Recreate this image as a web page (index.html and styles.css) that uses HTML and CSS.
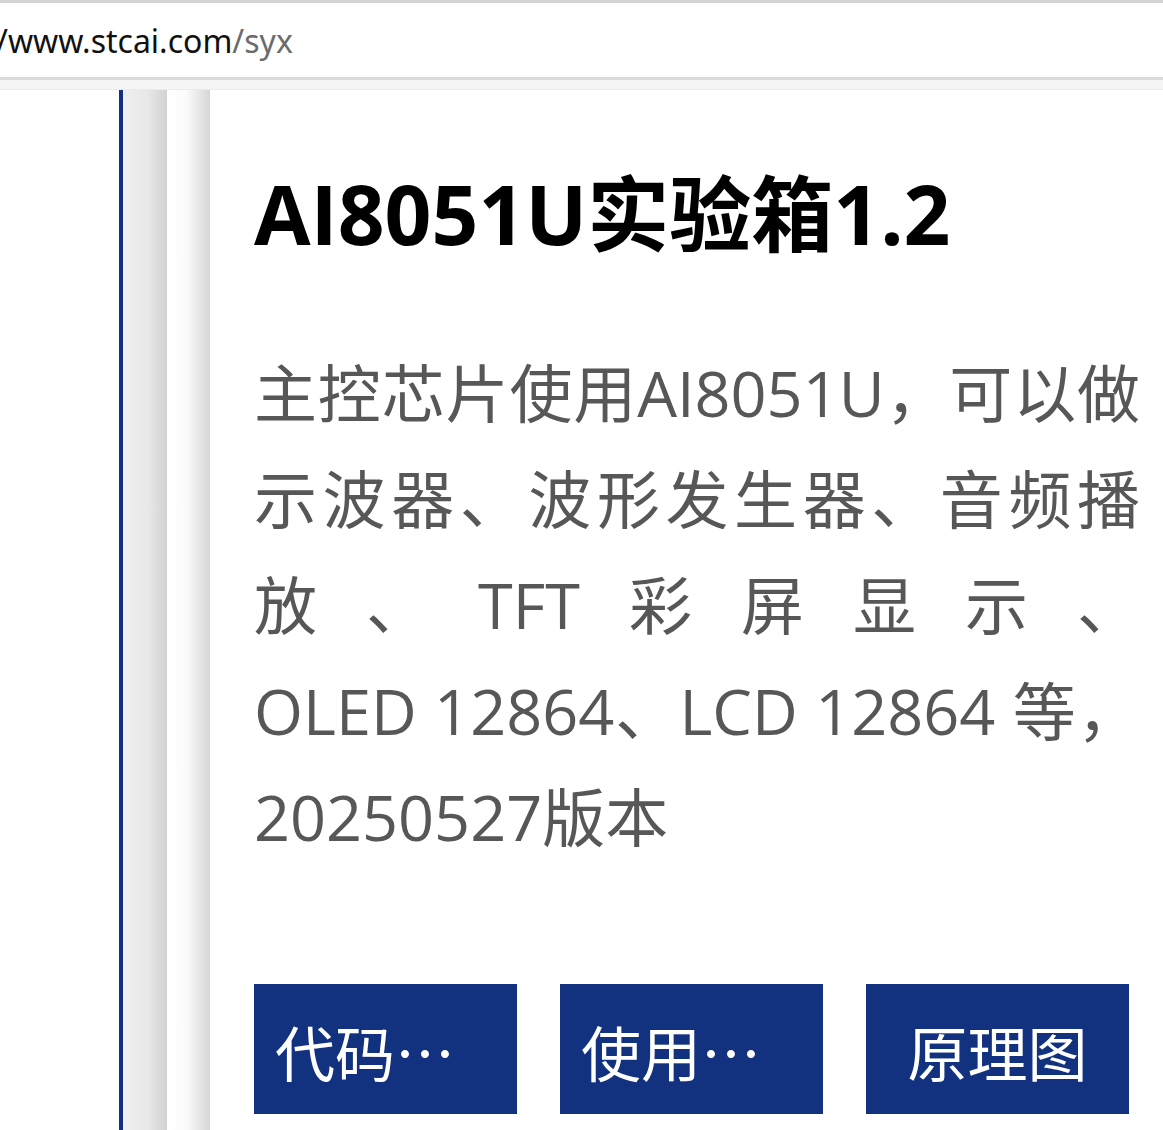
FILE: index.html
```html
<!DOCTYPE html>
<html lang="zh-CN">
<head>
<meta charset="utf-8">
<title>AI8051U实验箱1.2</title>
<link rel="stylesheet" href="styles.css">
</head>
<body>
<div class="urlbar"><span class="host">/www.stcai.com</span><span class="path">/syx</span></div>
<div class="band"></div>
<div class="main">
  <div class="gutter"></div>
  <div class="rail"></div>
  <div class="shade-a"></div>
  <div class="shade-b"></div>
  <div class="card">
    <h1 class="title">AI8051U实验箱1.2</h1>
    <p class="desc">
      <span class="line">主控芯片使用AI8051U，可以做</span>
      <span class="line">示波器、波形发生器、音频播</span>
      <span class="line">放、TFT彩屏显示、</span>
      <span class="line">OLED 12864、LCD 12864 等，</span>
      <span class="line last">20250527版本</span>
    </p>
    <div class="actions">
      <a class="btn">代码下载</a>
      <a class="btn">使用说明</a>
      <a class="btn">原理图</a>
    </div>
  </div>
</div>
</body>
</html>
```
FILE: styles.css
```css
html, body {
  margin: 0;
  padding: 0;
  background: #ffffff;
  overflow: hidden;
}
body {
  width: 1163px;
  height: 1130px;
  font-family: "Open Sans", "Noto Sans CJK SC", sans-serif;
}
.urlbar {
  height: 74px;
  border-top: 3px solid #d3d3d3;
  border-bottom: 3px solid #dadada;
  background: #ffffff;
  display: flex;
  align-items: center;
  font-family: "Noto Sans", sans-serif;
  font-size: 32px;
  white-space: nowrap;
  margin-left: -4px;
}
.urlbar .host { color: #111111; }
.urlbar .path { color: #6b6b6b; }
.band {
  height: 9px;
  background: #f5f5f5;
  border-bottom: 1px solid #ebebeb;
}
.main {
  display: flex;
  height: 1040px;
  overflow: hidden;
}
.gutter {
  width: 119px;
  flex: none;
  background: #ffffff;
}
.rail {
  width: 4px;
  flex: none;
  background: #13317f;
}
.shade-a {
  width: 44px;
  flex: none;
  background: linear-gradient(to right, #efefef 0%, #e8e8e8 55%, #d2d2d2 100%);
}
.shade-b {
  width: 43px;
  flex: none;
  background: linear-gradient(to right, #ffffff 0%, #fbfbfb 45%, #d6d6d6 100%);
}
.card {
  flex: none;
  width: 886px;
  padding-left: 44px;
}
.title {
  margin: 72px 0 0;
  font-size: 82px;
  line-height: 102px;
  font-weight: 700;
  color: #000000;
  white-space: nowrap;
}
.desc {
  margin: 76px 0 0;
  font-size: 63px;
  line-height: 106px;
  color: #575757;
}
.desc .line {
  display: block;
  text-align: justify;
  text-align-last: justify;
}
.desc .line.last {
  text-align-last: left;
}
.actions {
  display: flex;
  gap: 43px;
  margin-top: 114px;
}
.btn {
  display: block;
  width: 263px;
  height: 130px;
  box-sizing: border-box;
  padding: 4px 21px 0;
  background: #12327f;
  color: #ffffff;
  font-family: "Noto Sans CJK SC", sans-serif;
  font-size: 60px;
  line-height: 126px;
  text-align: center;
  white-space: nowrap;
  overflow: hidden;
  text-overflow: ellipsis;
}
```
